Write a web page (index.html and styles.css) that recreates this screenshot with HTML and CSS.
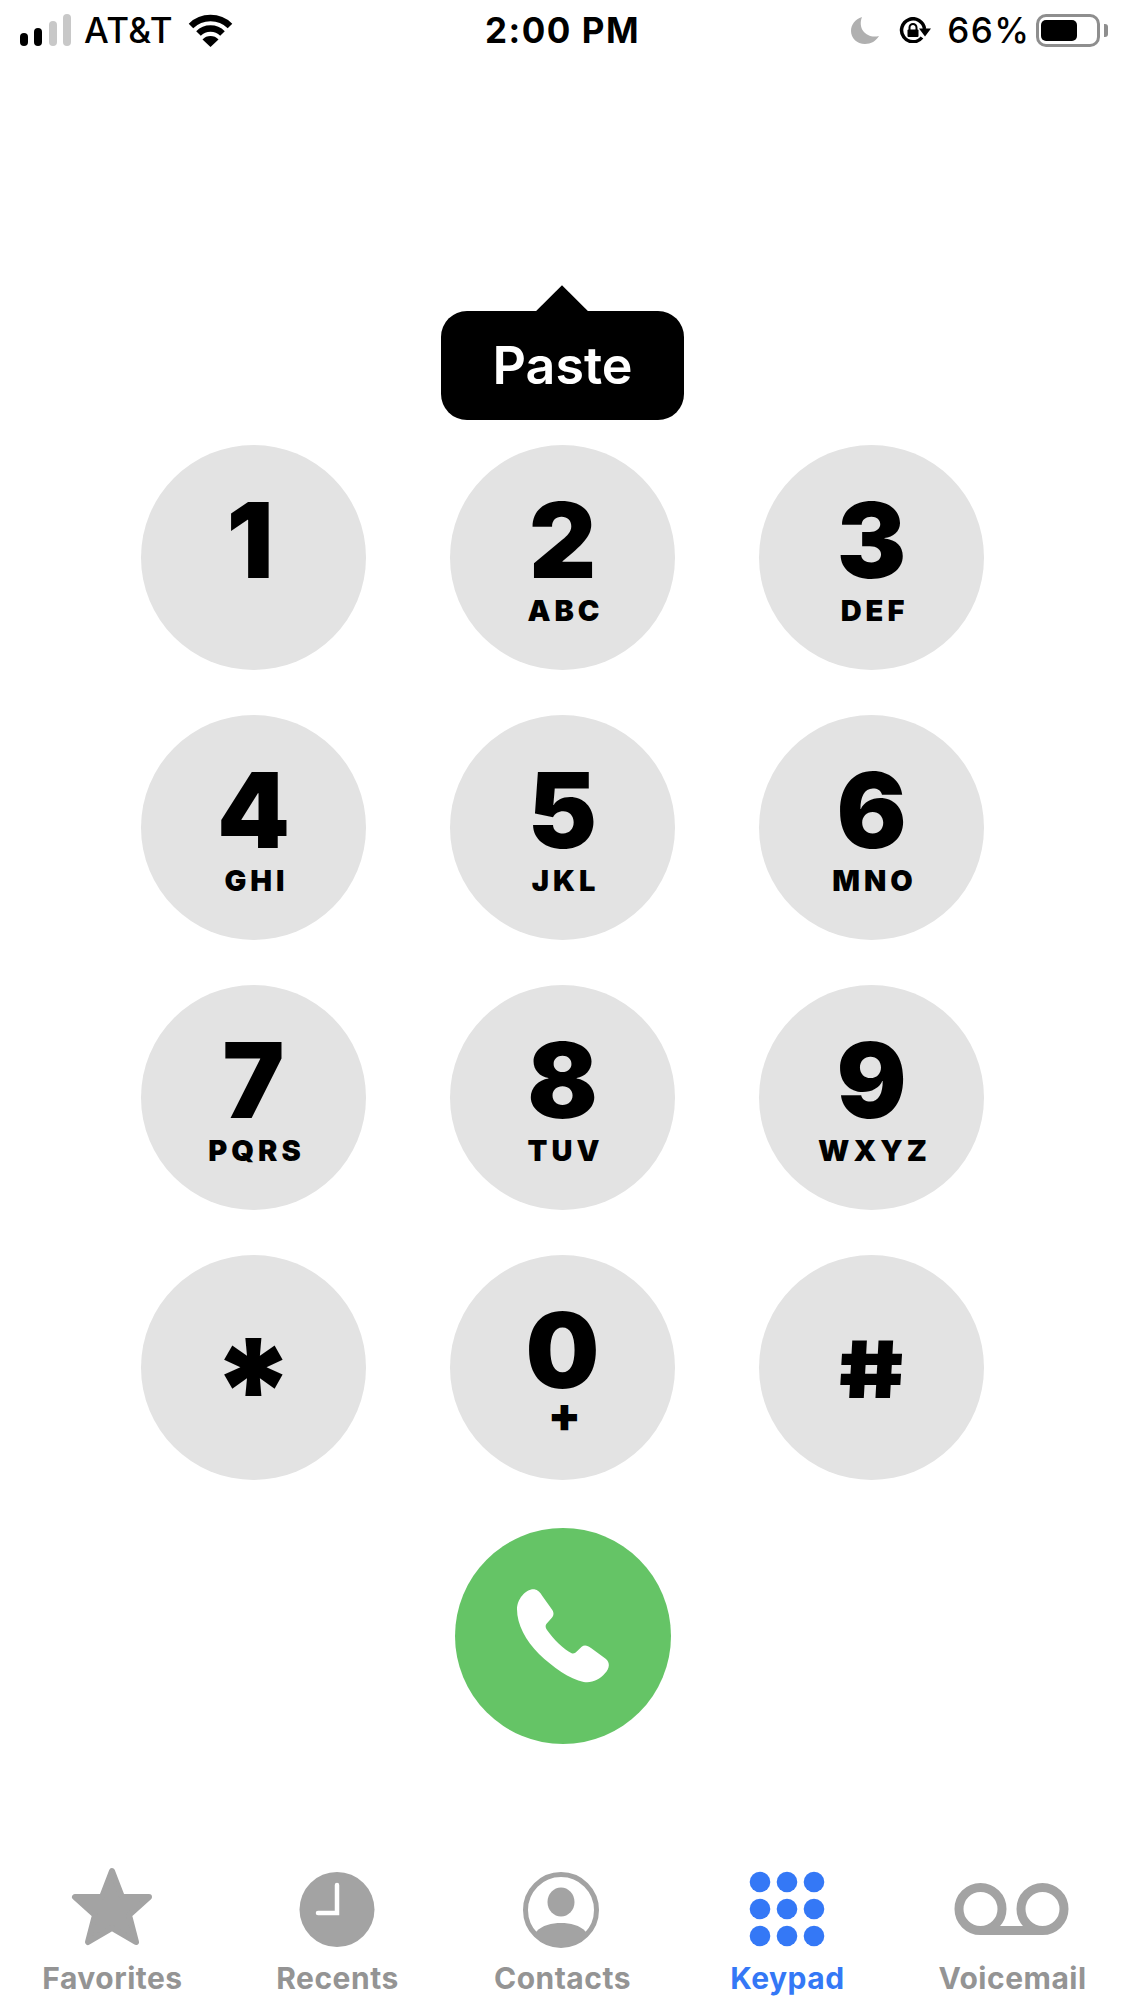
FILE: index.html
```html
<!DOCTYPE html>
<html lang="en">
<head>
<meta charset="utf-8">
<title>Keypad</title>
<link rel="stylesheet" href="styles.css">
</head>
<body>
<div class="phone">
  <header class="status">
    <div class="status-left">
      <div class="signal">
        <span class="bar bar-1"></span><span class="bar bar-2"></span><span class="bar bar-3 off"></span><span class="bar bar-4 off"></span>
      </div>
      <span class="carrier">AT&amp;T</span>
      <svg class="wifi" viewBox="0 0 45 33"><path class="wifi-arc" d="M3 12A28 28 0 0 1 42 12"/><path class="wifi-arc" d="M10.500 19.500A17 17 0 0 1 34.500 19.500"/><path class="wifi-dot" d="M22.500 33L14.500 25.500A11 11 0 0 1 30.500 25.500Z"/></svg>
    </div>
    <div class="time">2:00 PM</div>
    <div class="status-right">
      <svg class="moon" viewBox="0 0 28 27"><path d="M11 0C4 2 0 8 0 14C0 21 6 27 14 27C20 27 25 24 28 19C17 22 6 13 11 0Z"/></svg>
      <svg class="rotlock" viewBox="0 0 33 26"><path class="rot-ring" d="M26.500 12A11.500 11.500 0 1 0 24 20.500"/><path class="rot-arrow" d="M21 11.500H33L27 19.500Z"/><rect class="rot-body" x="9.500" y="12.500" width="11" height="7.500" rx="1"/><path class="rot-shackle" d="M11.500 13V10.500a3.500 3.500 0 0 1 7 0V13"/></svg>
      <span class="percent">66%</span>
      <div class="battery"><div class="battery-shell"><div class="battery-fill"></div></div><div class="battery-nub"></div></div>
    </div>
  </header>

  <main class="dialer">
    <div class="popup">Paste</div>
    <div class="keys">
      <div class="key"><span class="digit one">1</span></div>
      <div class="key"><span class="digit">2</span><span class="letters">ABC</span></div>
      <div class="key"><span class="digit">3</span><span class="letters">DEF</span></div>
      <div class="key"><span class="digit">4</span><span class="letters">GHI</span></div>
      <div class="key"><span class="digit">5</span><span class="letters">JKL</span></div>
      <div class="key"><span class="digit">6</span><span class="letters">MNO</span></div>
      <div class="key"><span class="digit">7</span><span class="letters">PQRS</span></div>
      <div class="key"><span class="digit">8</span><span class="letters">TUV</span></div>
      <div class="key"><span class="digit">9</span><span class="letters">WXYZ</span></div>
      <div class="key"><span class="digit star">*</span></div>
      <div class="key"><span class="digit">0</span><span class="letters plus">+</span></div>
      <div class="key"><span class="digit hash">#</span></div>
    </div>
    <div class="call">
      <svg class="call-icon" viewBox="220 200 300 300"><path d="M232 270C232 240 258 208 284 210C294 211 302 220 308 230L338 272C344 282 342 290 334 298L320 314C316 320 318 326 322 332C340 358 372 390 396 402C402 404 406 402 412 396L426 382C434 376 444 378 454 386L498 418C512 430 510 446 496 462C480 482 456 492 432 488C390 480 340 444 298 404C258 364 232 316 232 270Z"/></svg>
    </div>
  </main>

  <nav class="tabs">
    <div class="tab">
      <svg class="tab-icon" viewBox="1 0 120 84"><path class="fill-gray round-gray" d="M60 5L70 31H97L77 49L84 76L60 62L36 76L43 49L23 31H50Z"/></svg>
      <span class="tab-label">Favorites</span>
    </div>
    <div class="tab">
      <svg class="tab-icon" viewBox="1 0 120 84"><circle class="fill-gray" cx="60" cy="43.500" r="37.500"/><path class="clock-hands" d="M60 19V47H41"/></svg>
      <span class="tab-label">Recents</span>
    </div>
    <div class="tab">
      <svg class="tab-icon" viewBox="1 0 120 84"><circle class="ring" cx="59" cy="44" r="35.500"/><ellipse class="fill-gray" cx="59" cy="36" rx="13.500" ry="14.500"/><path class="fill-gray" d="M34 66C40 59 50 57 59 57C68 57 78 59 84 66V71A37 37 0 0 1 34 71Z"/></svg>
      <span class="tab-label">Contacts</span>
    </div>
    <div class="tab active">
      <svg class="tab-icon" viewBox="1 0 120 84"><g class="fill-blue"><circle cx="33" cy="16" r="10.300"/><circle cx="60" cy="16" r="10.300"/><circle cx="87" cy="16" r="10.300"/><circle cx="33" cy="43" r="10.300"/><circle cx="60" cy="43" r="10.300"/><circle cx="87" cy="43" r="10.300"/><circle cx="33" cy="70" r="10.300"/><circle cx="60" cy="70" r="10.300"/><circle cx="87" cy="70" r="10.300"/></g></svg>
      <span class="tab-label">Keypad</span>
    </div>
    <div class="tab">
      <svg class="tab-icon" viewBox="1 0 120 84"><circle class="vm" cx="28.500" cy="43" r="21.500"/><circle class="vm" cx="90.500" cy="43" r="21.500"/><path class="vm" d="M28.500 64.500H90.500"/></svg>
      <span class="tab-label">Voicemail</span>
    </div>
  </nav>
</div>
</body>
</html>
```
FILE: styles.css
```css
* { box-sizing: border-box; }
html, body { margin: 0; padding: 0; background: #fff; }
body { font-family: Inter, "Liberation Sans", sans-serif; color: #000; }
.phone { width: 1125px; height: 2000px; display: flex; flex-direction: column; overflow: hidden; }

/* status bar */
.status { height: 60px; display: grid; grid-template-columns: 1fr auto 1fr; align-items: center; padding: 0 16px; font-size: 35px; }
.status-left { display: flex; align-items: center; padding-left: 4px; }
.signal { display: flex; align-items: flex-end; gap: 6.300px; height: 32px; margin-right: 13px; }
.bar { width: 8px; background: #000; border-radius: 4px; }
.bar.off { background: #c8c8c8; }
.bar-1 { height: 13px; }
.bar-2 { height: 18px; }
.bar-3 { height: 25px; }
.bar-4 { height: 32px; }
.carrier { font-weight: 500; margin-right: 15px; letter-spacing: 0.500px; }
.wifi { width: 45px; height: 33px; }
.wifi-arc { fill: none; stroke: #000; stroke-width: 6.500; }
.wifi-dot { fill: #000; }
.time { font-weight: 700; font-size: 35px; letter-spacing: 1.500px; }
.status-right { display: flex; align-items: center; justify-content: flex-end; }
.moon { width: 28px; height: 27px; fill: #b0b0b0; margin-right: 19px; }
.rotlock { width: 33px; height: 26px; margin-right: 16px; }
.rot-ring { fill: none; stroke: #000; stroke-width: 3.500; }
.rot-arrow, .rot-body { fill: #000; }
.rot-shackle { fill: none; stroke: #000; stroke-width: 2; }
.percent { font-weight: 500; letter-spacing: 1.500px; margin-right: 5.500px; }
.battery { display: flex; align-items: center; gap: 4px; margin-right: 1px; }
.battery-shell { width: 64px; height: 33px; border: 3px solid #8e8e8e; border-radius: 10px; padding: 3px 2px; display: flex; }
.battery-fill { width: 36px; background: #000; border-radius: 5px; }
.battery-nub { width: 4px; height: 13px; background: #8e8e8e; border-radius: 0 3px 3px 0; }

/* dialer */
.dialer { display: flex; flex-direction: column; align-items: center; }
.popup { position: relative; width: 243px; height: 109px; margin-top: 251px; background: #000; color: #fff; border-radius: 26px; font-size: 52px; font-weight: 600; display: flex; align-items: center; justify-content: center; }
.popup::before { content: ""; position: absolute; left: 50%; top: -26px; width: 38px; height: 38px; margin-left: -20px; background: #000; transform: translateY(8px) rotate(45deg); }
.keys { display: grid; grid-template-columns: repeat(3, 225px); grid-auto-rows: 225px; column-gap: 84px; row-gap: 45px; margin-top: 25px; }
.key { border-radius: 50%; background: #e3e3e3; display: flex; flex-direction: column; align-items: center; padding-top: 49.500px; }
.digit { font-size: 104px; font-weight: 900; line-height: 90px; height: 90px; }
.one { margin-right: 7px; }
.letters { font-size: 29px; font-weight: 900; line-height: 36px; letter-spacing: 4px; margin-top: 8.500px; margin-right: -6px; }
.plus { font-size: 48px; line-height: 36px; letter-spacing: 0; margin-top: 2.500px; margin-right: -4px; }
.star { font-size: 142px; line-height: 120px; height: 120px; margin-top: 24px; }
.hash { font-size: 79px; line-height: 90px; height: 90px; margin-top: 19px; transform: scaleX(1.3) skewX(7deg); }
.call { width: 216px; height: 216px; margin-top: 48px; border-radius: 50%; background: #65c466; display: flex; align-items: center; justify-content: center; }
.call-icon { width: 100px; height: 100px; fill: #fff; }

/* tabs */
.tabs { display: grid; grid-template-columns: repeat(5, 1fr); margin-top: 122px; }
.tab { display: flex; flex-direction: column; align-items: center; color: #949494; }
.tab.active { color: #3478f6; }
.tab-icon { width: 120px; height: 84px; }
.tab-label { font-size: 30px; font-weight: 700; line-height: 36px; margin-top: 10px; letter-spacing: 0.500px; }
.fill-gray { fill: #a3a3a3; }
.round-gray { stroke: #a3a3a3; stroke-width: 6; stroke-linejoin: round; }
.fill-blue { fill: #3478f6; }
.clock-hands { fill: none; stroke: #fff; stroke-width: 4.500; stroke-linecap: round; stroke-linejoin: miter; }
.ring { fill: none; stroke: #a3a3a3; stroke-width: 5; }
.vm { fill: none; stroke: #a3a3a3; stroke-width: 9; }
```
